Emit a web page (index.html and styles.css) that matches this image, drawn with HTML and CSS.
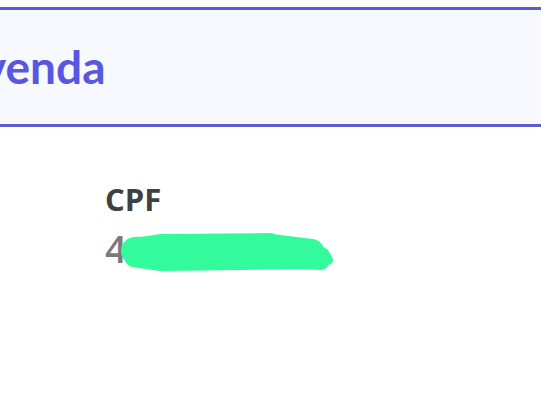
FILE: index.html
```html
<!DOCTYPE html>
<html lang="pt-BR">
<head>
    <meta charset="UTF-8">
    <meta name="viewport" content="width=device-width, initial-scale=1.0">
    <title>Venda</title>
    <link rel="stylesheet" href="styles.css">
</head>
<body>
    <header class="page-header">
        <h1 class="page-title">venda</h1>
    </header>

    <section class="details">
        <div class="field">
            <div class="field-label">CPF</div>
            <div class="field-value">
                <span class="value-text">4</span>
                <!-- valor ocultado com marcador -->
                <svg class="redact" width="214" height="42" viewBox="0 0 214 42" aria-hidden="true">
                    <g fill="none" stroke="#33fb9c" stroke-linecap="round" stroke-linejoin="round">
                        <path d="M14 20 L60 18 L150 17 L190 22" stroke-width="28"/>
                        <path d="M12 28 L40 32 L120 31 L180 30 L200 31" stroke-width="16"/>
                        <path d="M16 12 L40 8 L150 7" stroke-width="10"/>
                        <path d="M188 20 L203 22 L207 29" stroke-width="10"/>
                    </g>
                </svg>
            </div>
        </div>
    </section>
</body>
</html>
```

FILE: styles.css
```css
body {
    margin: 0;
    padding-top: 7px;
    background-color: #fdfcfb;
    font-family: "Open Sans", sans-serif;
    overflow: hidden;
}
.page-header {
    background: #f8f8ff;
    border-top: 3px solid #5b5bd6;
    border-bottom: 3px solid #5b5bd6;
    height: 114px;
    display: flex;
    align-items: center;
}
.page-title {
    margin: 0 0 0 -18px;
    font-family: Lato, sans-serif;
    font-weight: 700;
    font-size: 46px;
    color: #5757e0;
    line-height: 1;
}
.details {
    box-sizing: border-box;
    background: #fff;
    padding: 52px 0 0 105px;
    height: calc(100vh - 127px);
}
.field-label {
    font-weight: 700;
    font-size: 31px;
    color: #404040;
    line-height: 1.3;
}
.field-value {
    display: flex;
    align-items: center;
    margin-top: 4px;
}
.value-text {
    font-size: 38px;
    font-weight: 600;
    color: #7a7a7a;
    line-height: 1.3;
}
.redact {
    margin-left: -6px;
    margin-top: 8px;
}
```
